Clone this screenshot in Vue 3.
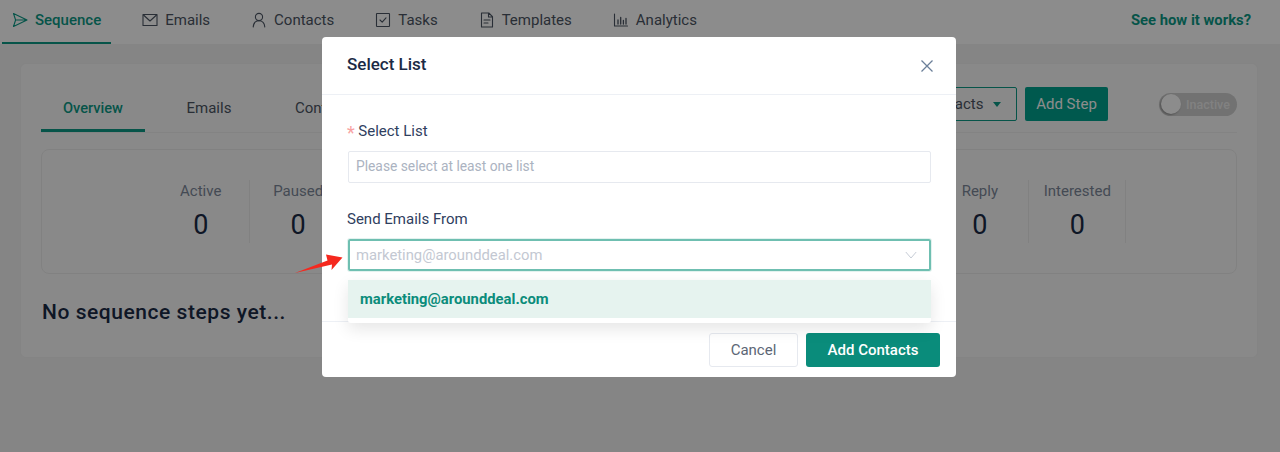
<script setup>
const navItems = [
  { label: 'Sequence', icon: 'send', active: true },
  { label: 'Emails', icon: 'mail' },
  { label: 'Contacts', icon: 'user' },
  { label: 'Tasks', icon: 'task' },
  { label: 'Templates', icon: 'doc' },
  { label: 'Analytics', icon: 'chart' }
]

const tabs = ['Overview', 'Emails', 'Contacts']

// the middle cells sit behind the modal
const stats = ['Active', 'Paused', '', '', '', '', '', '', 'Reply', 'Interested']
</script>

<template>
  <div class="page">
    <nav class="nav">
      <a v-for="item in navItems" :key="item.label" class="nav-item" :class="{ active: item.active }">
        <svg class="nav-icon" :class="item.icon" viewBox="0 0 16 16" fill="none" stroke="currentColor" stroke-width="1.1" stroke-linejoin="round" stroke-linecap="round">
          <path v-if="item.icon === 'send'" d="M1.5 1.5 15 8 1.5 14.5 3.6 8ZM3.6 8H15" />
          <template v-else-if="item.icon === 'mail'">
            <rect x="1" y="2.5" width="14" height="11" />
            <path d="M1.5 3 8 9l6.5-6" />
          </template>
          <template v-else-if="item.icon === 'user'">
            <circle cx="8" cy="5" r="3.6" />
            <path d="M2.2 15c.3-3.6 2.6-6.2 5.8-6.2s5.500 2.600 5.800 6.200" />
          </template>
          <template v-else-if="item.icon === 'task'">
            <rect x="1.500" y="1.500" width="13" height="13" rx="0.5" />
            <path d="M5 8l2.200 2.200L11 5.800" />
          </template>
          <template v-else-if="item.icon === 'doc'">
            <path d="M2.500 1h7.300L13.500 4.700V15h-11ZM9.500 1v4h4" />
            <path d="M5 8h6M5 11h4" />
          </template>
          <template v-else>
            <path d="M1.500 2v12h13" />
            <path d="M5 8v4M7.700 5.500V12M10.400 8.500V12M13 6.500V12" stroke-width="1.300" />
          </template>
        </svg>
        {{ item.label }}
      </a>
      <a class="how">See how it works?</a>
    </nav>

    <main class="main">
      <section class="card">
        <div class="tabs-row">
          <a v-for="(tab, i) in tabs" :key="tab" class="tab" :class="{ active: i === 0 }">{{ tab }}</a>
          <div class="actions">
            <button class="btn-outline">Add Contacts <span class="caret"></span></button>
            <button class="btn-solid">Add Step</button>
            <div class="toggle">
              <span class="knob"></span>
              <span class="toggle-text">Inactive</span>
            </div>
          </div>
        </div>

        <div class="stats">
          <div v-for="(stat, i) in stats" :key="i" class="stat">
            <template v-if="stat">
              <span class="stat-label">{{ stat }}</span>
              <span class="stat-value">0</span>
            </template>
          </div>
        </div>

        <h2 class="empty">No sequence steps yet...</h2>
      </section>
    </main>

    <div class="overlay">
      <div class="modal">
        <header class="modal-head">
          <span class="modal-title">Select List</span>
          <svg class="close" viewBox="0 0 14 14" fill="none" stroke="#6b7f99" stroke-width="1.300">
            <path d="M1.500 1.500l11 11M12.500 1.500l-11 11" />
          </svg>
        </header>

        <div class="modal-body">
          <label class="field-label"><span class="star">*</span>Select List</label>
          <div class="input">Please select at least one list</div>

          <label class="field-label second">Send Emails From</label>
          <div class="select-wrap">
            <div class="select">
              <span>marketing@arounddeal.com</span>
              <svg class="chevron" viewBox="0 0 12 8" fill="none" stroke="#c6ccd6" stroke-width="1">
                <path d="M.8 1l5.200 6 5.200-6" />
              </svg>
            </div>
            <div class="dropdown">
              <div class="option">marketing@arounddeal.com</div>
            </div>
          </div>
        </div>

        <footer class="modal-foot">
          <button class="btn-cancel">Cancel</button>
          <button class="btn-add">Add Contacts</button>
        </footer>
      </div>

      <svg class="arrow" viewBox="0 0 48 20">
        <path d="M0 19 32.500 6.500 31 .5 47.500 3.500 36.500 16 37 10.500Z" fill="#f5281e" />
      </svg>
    </div>
  </div>
</template>

<style>
html,
body {
  margin: 0;
  overflow: hidden;
}
</style>

<style scoped>
.page {
  position: relative;
  width: 1280px;
  height: 452px;
  overflow: hidden;
  background: #f3f3f3;
  font-family: Roboto, "Liberation Sans", sans-serif;
  color: #1b2a45;
}

.nav {
  display: flex;
  align-items: stretch;
  height: 44px;
  background: #fff;
  padding: 0 29px 0 2px;
  box-sizing: border-box;
  font-size: 15px;
}

.nav-item {
  display: flex;
  align-items: center;
  gap: 7px;
  color: #4b5563;
  padding: 0 10px;
  margin-right: 21px;
  border-bottom: 2px solid transparent;
  padding-bottom: 3px;
  box-sizing: border-box;
}

.nav-item.active {
  color: #0b9a86;
  font-weight: 500;
  border-bottom-color: #0b9a86;
}

.nav-icon {
  width: 16px;
  height: 16px;
}

.how {
  margin-left: auto;
  align-self: center;
  padding-bottom: 5px;
  font-weight: 700;
  font-size: 14.800px;
  color: #0b9a86;
}

.main {
  padding: 19px 22px 0 20px;
}

.card {
  height: 295px;
  box-sizing: border-box;
  padding: 20px;
  background: #fafafa;
  border: 1px solid #f0f0f0;
  border-radius: 6px;
}

.tabs-row {
  display: flex;
  align-items: stretch;
  height: 48px;
  border-bottom: 1px solid #eeeeee;
  font-size: 15px;
}

.tab {
  padding: 3px 22px 0;
  margin-right: 19.600px;
  height: 48px;
  line-height: 42px;
  box-sizing: border-box;
  color: #4b5563;
}

.tab.active {
  color: #0b9a86;
  font-size: 14.600px;
  font-weight: 500;
  border-bottom: 3px solid #0b9a86;
}

.actions {
  display: flex;
  align-items: center;
  margin-left: auto;
  height: 34px;
  margin-top: 3px;
}

.btn-outline,
.btn-solid {
  height: 34px;
  font: inherit;
  border-radius: 2px;
  padding: 0;
}

.btn-outline {
  width: 140px;
  background: transparent;
  border: 1px solid #0b9a86;
  color: #4b5563;
}

.caret {
  display: inline-block;
  margin-left: 6px;
  vertical-align: 2px;
  border: 4.500px solid transparent;
  border-top: 5px solid #0b9a86;
  border-bottom: 0;
}

.btn-solid {
  width: 83px;
  margin-left: 8px;
  border: 0;
  background: #00a38e;
  color: #fff;
}

.toggle {
  display: flex;
  align-items: center;
  width: 78px;
  height: 23px;
  margin-left: 51px;
  border-radius: 12px;
  background: #cfcfcf;
  font-size: 12.500px;
  font-weight: 500;
  color: #ececec;
}

.knob {
  width: 20px;
  height: 20px;
  margin: 0 5px 0 2px;
  border-radius: 50%;
  background: #fff;
  box-shadow: -1px 1px 2px rgba(0, 0, 0, 0.3);
}

.toggle-text {
  line-height: 25px;
}

.stats {
  display: flex;
  justify-content: center;
  height: 125px;
  margin-top: 16px;
  box-sizing: border-box;
  padding: 30px 0 0 1px;
  border: 1px solid #ececec;
  border-radius: 8px;
}

.stat {
  display: flex;
  flex-direction: column;
  align-items: center;
  width: 97.400px;
  height: 63px;
  box-sizing: border-box;
  border-right: 1px solid #ececec;
}

.stat-label {
  margin-top: 1px;
  font-size: 15px;
  line-height: 20px;
  color: #7d8899;
}

.stat-value {
  font-size: 27px;
  line-height: 30px;
  margin-top: 9px;
  color: #1b2a45;
}

.empty {
  margin: 24px 0 0 1px;
  font-size: 21px;
  line-height: 28px;
  font-weight: 500;
  letter-spacing: 0.550px;
  color: #1b2a45;
}

.overlay {
  position: absolute;
  inset: 0;
  background: rgba(0, 0, 0, 0.45);
}

.modal {
  width: 634px;
  height: 340px;
  margin: 37px 0 0 322px;
  display: flex;
  flex-direction: column;
  background: #fff;
  border-radius: 4px;
}

.modal-head {
  display: flex;
  align-items: center;
  justify-content: space-between;
  height: 58px;
  flex: none;
  box-sizing: border-box;
  padding: 0 22px 4px 25px;
  border-bottom: 1px solid #edf0f5;
}

.modal-title {
  font-size: 17px;
  font-weight: 500;
  color: #1b2a45;
}

.close {
  width: 14px;
  height: 14px;
  margin-top: 5px;
}

.modal-body {
  flex: 1;
  padding: 26px 25px 0 26px;
}

.field-label {
  display: block;
  height: 20px;
  font-size: 15px;
  line-height: 20px;
  color: #2f4060;
}

.field-label.second {
  margin-top: 26px;
  margin-left: -1px;
}

.star {
  margin: 0 3.500px 0 -1px;
  font-size: 18px;
  line-height: 20px;
  vertical-align: -3px;
  color: #f8a3a3;
}

.input {
  display: flex;
  align-items: center;
  height: 32px;
  margin-top: 10px;
  box-sizing: border-box;
  padding: 0 0 2px 7px;
  border: 1px solid #e6e9ef;
  border-radius: 2px;
  font-size: 13.800px;
  color: #abb3c1;
}

.select-wrap {
  position: relative;
  margin-top: 10px;
}

.select {
  display: flex;
  align-items: center;
  justify-content: space-between;
  height: 32px;
  box-sizing: border-box;
  padding: 0 12px 0 6px;
  border: 2px solid #6fbfb1;
  border-radius: 2px;
  font-size: 14.800px;
  color: #c3c8d2;
  box-shadow: 0 0 0 1px #e3f2ef;
}

.chevron {
  width: 12px;
  height: 8px;
}

.dropdown {
  position: absolute;
  top: 41px;
  left: 0;
  right: 0;
  height: 43px;
  background: #fff;
  border-radius: 0 0 3px 3px;
  box-shadow: 0 6px 16px rgba(0, 0, 0, 0.1);
  z-index: 2;
}

.option {
  display: flex;
  align-items: center;
  height: 38px;
  padding-left: 12px;
  background: #e6f3ef;
  font-size: 14.800px;
  font-weight: 700;
  color: #0b8c7b;
}

.modal-foot {
  display: flex;
  justify-content: flex-end;
  gap: 8px;
  flex: none;
  height: 56px;
  box-sizing: border-box;
  padding: 11px 16px 0 0;
  border-top: 1px solid #edf0f5;
}

.btn-cancel,
.btn-add {
  height: 34px;
  border-radius: 3px;
  font-family: inherit;
  font-size: 15px;
  padding: 0;
}

.btn-cancel {
  width: 89px;
  background: #fff;
  border: 1px solid #e6e9ef;
  color: #5c6675;
}

.btn-add {
  width: 134px;
  border: 0;
  background: #0a8c7b;
  color: #fff;
  font-weight: 500;
}

.arrow {
  position: absolute;
  left: 295px;
  top: 253.500px;
  width: 48px;
  height: 20px;
}
</style>
